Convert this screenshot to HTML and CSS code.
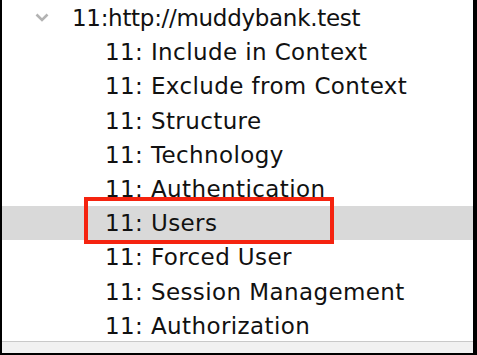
FILE: index.html
```html
<!DOCTYPE html>
<html>
<head>
<meta charset="utf-8">
<link rel="stylesheet" href="styles.css">
</head>
<body>
<div class="frame">
  <div class="tree">
    <div class="row root">
      <svg class="chev" width="14" height="9" viewBox="0 0 14 9"><path d="M1.5 1.5 L7 7 L12.5 1.5" fill="none" stroke="#b3b3b3" stroke-width="2.6"/></svg>
      <span class="label">11:http://muddybank.test</span>
    </div>
    <div class="row child"><span class="label">11: Include in Context</span></div>
    <div class="row child"><span class="label">11: Exclude from Context</span></div>
    <div class="row child"><span class="label">11: Structure</span></div>
    <div class="row child"><span class="label">11: Technology</span></div>
    <div class="row child"><span class="label">11: Authentication</span></div>
    <div class="row child selected"><span class="label">11: Users</span><span class="mark"></span></div>
    <div class="row child"><span class="label">11: Forced User</span></div>
    <div class="row child"><span class="label">11: Session Management</span></div>
    <div class="row child"><span class="label">11: Authorization</span></div>
  </div>
  <div class="hbar"></div>
</div>
</body>
</html>
```
FILE: styles.css
```css
html, body {
  margin: 0;
  padding: 0;
  background: #ffffff;
}
.frame {
  width: 477px;
  height: 355px;
  box-sizing: border-box;
  border-left: 2px solid #000;
  border-right: 4px solid #000;
  border-bottom: 2px solid #000;
  display: flex;
  flex-direction: column;
  overflow: hidden;
  font-family: "DejaVu Sans", sans-serif;
  color: #111;
}
.tree {
  flex: 1;
  padding-top: 1px;
  overflow: hidden;
}
.row {
  height: 34.2px;
  display: flex;
  align-items: center;
  position: relative;
  font-size: 23px;
  letter-spacing: 0.4px;
  white-space: nowrap;
}
.root {
  padding-left: 33px;
  letter-spacing: -0.3px;
}
.chev {
  margin-right: 23px;
  margin-top: -2px;
}
.child {
  padding-left: 103px;
}
.selected {
  background: #d9d9d9;
}
.mark {
  position: absolute;
  left: 82px;
  top: -9px;
  width: 250px;
  height: 47px;
  box-sizing: border-box;
  border: 4px solid #f5230f;
}
.hbar {
  height: 11px;
  border-top: 1px solid #c9c9c9;
  background: #f1f1f1;
}
```
